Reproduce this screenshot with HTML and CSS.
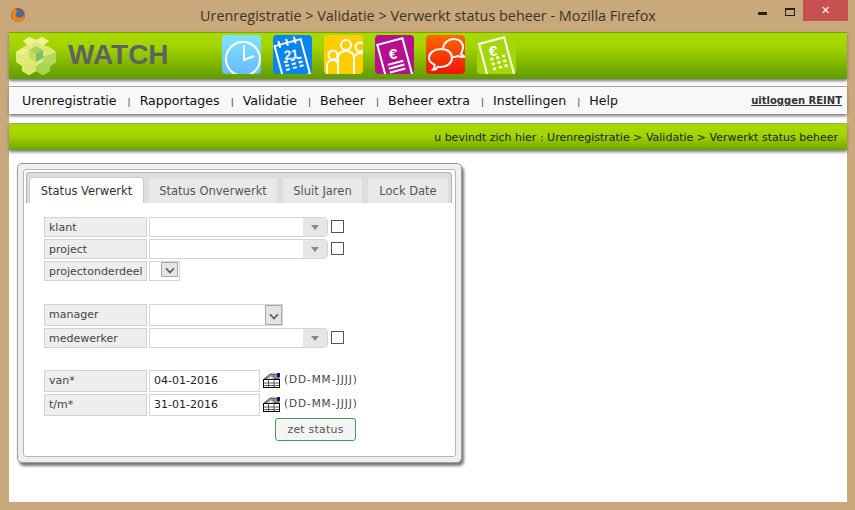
FILE: index.html
```html
<!DOCTYPE html>
<html lang="nl">
<head>
  <meta charset="UTF-8" />
  <title>Urenregistratie > Validatie > Verwerkt status beheer</title>
  <link rel="stylesheet" href="styles.css">
</head>
<body>
  <div class="titlebar">
    <svg class="ff" width="16" height="16" viewBox="0 0 16 16">
      <circle cx="8" cy="8" r="7" fill="#c8431e"/>
      <circle cx="9" cy="6.5" r="4.4" fill="#3d6ea8"/>
      <path d="M1.5 6C3 3 4 2 6 1 5 3 6 4 8 4 6 5 5 7 6 9c1 2 4 2 6 1 1-.6 2-1.6 2.6-3C14.8 11 12 15 8 15 4 15 1 11 1.500 6z" fill="#e8861c"/>
    </svg>
    <span class="wintitle">Urenregistratie &gt; Validatie &gt; Verwerkt status beheer - Mozilla Firefox</span>
    <div class="winbtns">
      <span class="win-min"></span>
      <span class="win-max"></span>
      <span class="win-close">✕</span>
    </div>
  </div>

  <div class="page">
    <header class="top">
      <svg class="logo" width="40" height="39" viewBox="0 0 40 39">
        <path d="M13 1l7 3 6-3 7 4-5 4 7 3 5 4v10l-6 4v5l-7 4-7-4-7 4-7-4v-5l-6-4V16l6-4 5-3-4-4z" fill="#e2ea78"/>
        <polygon points="13,1 20,4 26,1 33,5 27,9 20,6 13,9 7,5" fill="#f0f296"/>
        <polygon points="0,16 6,12 13,15 7,19" fill="#eef08c"/>
        <polygon points="28,12 35,12 40,16 33,19 27,15" fill="#dce86e"/>
        <polygon points="13,14 20,10 27,14 20,18" fill="#a6d452"/>
        <polygon points="13,14 20,18 20,26 13,22" fill="#c6de5e"/>
        <polygon points="20,18 27,14 27,22 20,26" fill="#74c26c"/>
        <polygon points="27,20 33,19 40,16 40,26 34,30 27,26" fill="#b4da5a"/>
        <polygon points="20,35 27,39 34,35 34,29 27,26 20,30" fill="#a8d456"/>
        <polygon points="13,27 20,30 20,35 13,39 6,35 6,30" fill="#dce670"/>
      </svg>
      <span class="brand">WATCH</span>
      <div class="apps">
        <svg class="app" viewBox="0 0 39 39">
          <defs><linearGradient id="g1" x1="0" y1="0" x2="0" y2="1"><stop offset="0" stop-color="#7fe4ff"/><stop offset="1" stop-color="#66bcff"/></linearGradient></defs>
          <rect width="39" height="39" rx="4" fill="url(#g1)"/>
          <circle cx="21" cy="24" r="17" fill="none" stroke="#fff" stroke-width="2"/>
          <path d="M22 10v15l10-4" fill="none" stroke="#fff" stroke-width="2"/>
        </svg>
        <svg class="app" viewBox="0 0 39 39">
          <rect width="39" height="39" rx="4" fill="#0a84ee"/>
          <g transform="rotate(-15 19 22)">
            <rect x="5" y="7" width="27" height="36" fill="none" stroke="#fff" stroke-width="2"/>
            <path d="M10 3v7M18 3v7M26 3v7" stroke="#fff" stroke-width="2"/>
            <path d="M10 25h4M17 25h4M24 25h4M10 29h4M17 29h4M24 29h4M10 33h4M17 33h4M24 33h4" stroke="#fff" stroke-width="2"/>
          </g>
          <text x="11" y="24" class="cal" transform="rotate(-8 19 20)">21</text>
        </svg>
        <svg class="app" viewBox="0 0 39 39">
          <rect width="39" height="39" rx="4" fill="#ffce00"/>
          <g fill="none" stroke="#fff" stroke-width="2">
            <circle cx="9" cy="20" r="4.500"/>
            <circle cx="22" cy="10" r="5"/>
            <circle cx="36" cy="12" r="4.500"/>
            <path d="M3 39V31c0-4 3-6 6-6 2 0 4 1 5 3"/>
            <path d="M14 39V22c0-3 3-6 8-6s8 3 8 6v17"/>
            <path d="M30 22c2-3 4-4 6-4 2 0 3 1 3 1"/>
          </g>
        </svg>
        <svg class="app" viewBox="0 0 39 39">
          <rect width="39" height="39" rx="4" fill="#b5108f"/>
          <g transform="rotate(-15 19 22)">
            <rect x="6" y="6" width="26" height="38" fill="none" stroke="#fff" stroke-width="2"/>
            <path d="M11 28h16M11 32h16M11 36h16" stroke="#fff" stroke-width="2"/>
          </g>
          <text x="14" y="24" class="euro">€</text>
        </svg>
        <svg class="app" viewBox="0 0 39 39">
          <defs><linearGradient id="g5" x1="0" y1="0" x2="0" y2="1"><stop offset="0" stop-color="#ff6a00"/><stop offset="1" stop-color="#f01400"/></linearGradient></defs>
          <rect width="39" height="39" rx="4" fill="url(#g5)"/>
          <g fill="none" stroke="#fff" stroke-width="2">
            <path d="M17 13c1-6 6-9 11-9 6 0 9 4 9 8 0 3-1 5-2 7l4 3c-3 0-5 0-7-1-2 1-3 1-5 1"/>
            <path d="M15 14c7 0 11 4 11 9s-5 9-11 9c-1 0-2 0-3-.3-1 2-3 3-5 3 1-1 2-3 1.500-5C5 28 3 26 3 23c0-5 5-9 12-9z"/>
          </g>
        </svg>
        <svg class="app" viewBox="0 0 39 39">
          <rect width="39" height="39" rx="4" fill="#a5d608"/>
          <g transform="rotate(-15 19 22)">
            <rect x="6" y="5" width="26" height="40" fill="none" stroke="#fff" stroke-width="2"/>
            <path d="M13 23h3M19 23h3M25 23h3M13 28h3M19 28h3M25 28h3M13 33h3M19 33h3M25 33h3" stroke="#fff" stroke-width="2.500"/>
          </g>
          <text x="12" y="21" class="euro">€</text>
        </svg>
      </div>
    </header>

    <nav class="menu">
      <a>Urenregistratie</a><i>|</i>
      <a>Rapportages</a><i>|</i>
      <a>Validatie</a><i>|</i>
      <a>Beheer</a><i>|</i>
      <a>Beheer extra</a><i>|</i>
      <a>Instellingen</a><i>|</i>
      <a>Help</a>
      <a class="logout">uitloggen REINT</a>
    </nav>

    <div class="crumb">u bevindt zich hier : Urenregistratie &gt; Validatie &gt; Verwerkt status beheer</div>

    <div class="panel">
      <div class="panel-in">
        <div class="tabs">
          <span class="tab active">Status Verwerkt</span>
          <span class="tab t2">Status Onverwerkt</span>
          <span class="tab t3">Sluit Jaren</span>
          <span class="tab t4">Lock Date</span>
        </div>

        <div class="form">
          <div class="row">
            <label>klant</label>
            <span class="combo"><b></b></span>
            <span class="check"></span>
          </div>
          <div class="row">
            <label>project</label>
            <span class="combo"><b></b></span>
            <span class="check"></span>
          </div>
          <div class="row">
            <label>projectonderdeel</label>
            <span class="sel tiny"><b></b></span>
          </div>

          <div class="row tall group-a">
            <label>manager</label>
            <span class="sel wide"><b></b></span>
          </div>
          <div class="row">
            <label>medewerker</label>
            <span class="combo"><b></b></span>
            <span class="check"></span>
          </div>

          <div class="row tall group-b">
            <label>van*</label>
            <span class="date">04-01-2016</span>
            <svg class="calicon" viewBox="0 0 17 15">
              <rect x=".5" y="6.500" width="16" height="8" fill="#fff" stroke="#000"/>
              <path d="M.5 10h16M.5 12.500h16M5.500 7v7M11 7v7" stroke="#333" stroke-width=".8"/>
              <path d="M1 6l6-5h7l2 2v3z" fill="#8a8f92" stroke="#333" stroke-width=".7"/>
              <path d="M4 6l4-3 3 3z" fill="#dfe2e4"/>
              <rect x="14" y="0" width="3" height="4" fill="#12128a"/>
            </svg>
            <span class="fmt">(DD-MM-JJJJ)</span>
          </div>
          <div class="row tall">
            <label>t/m*</label>
            <span class="date">31-01-2016</span>
            <svg class="calicon" viewBox="0 0 17 15">
              <rect x=".5" y="6.500" width="16" height="8" fill="#fff" stroke="#000"/>
              <path d="M.5 10h16M.5 12.500h16M5.500 7v7M11 7v7" stroke="#333" stroke-width=".8"/>
              <path d="M1 6l6-5h7l2 2v3z" fill="#8a8f92" stroke="#333" stroke-width=".7"/>
              <path d="M4 6l4-3 3 3z" fill="#dfe2e4"/>
              <rect x="14" y="0" width="3" height="4" fill="#12128a"/>
            </svg>
            <span class="fmt">(DD-MM-JJJJ)</span>
          </div>
          <button class="zet">zet status</button>
        </div>
      </div>
    </div>
  </div>
</body>
</html>
```

FILE: styles.css
```css
* { box-sizing: border-box; }
html, body { height: 100%; }
body {
  margin: 0;
  background: #c9a87c;
  display: flex;
  flex-direction: column;
  padding-bottom: 8px;
  overflow: hidden;
  font-family: "DejaVu Sans", Verdana, sans-serif;
  color: #333;
}

/* window frame */
.titlebar { height: 32px; flex: none; display: flex; position: relative; justify-content: center; }
.ff { position: absolute; left: 10px; top: 7px; }
.wintitle { font: 14.4px/32px "Open Sans", sans-serif; color: #3d3428; margin-left: 1px; }
.winbtns { position: absolute; right: 7px; top: 0; display: flex; align-items: flex-start; }
.win-min { width: 9px; height: 3px; background: #2a2015; margin-top: 12px; margin-right: 18px; }
.win-max { width: 10px; height: 8px; border: 1px solid #2a2015; border-top-width: 2px; margin-top: 8px; margin-right: 8px; }
.win-close { width: 45px; height: 21px; background: #c75050; color: #fff; font-size: 11px; line-height: 21px; text-align: center; }

.page { flex: 1; margin: 0 8px 0 9px; background: #fff; }

/* header */
.top {
  height: 47px;
  display: flex;
  align-items: flex-start;
  background: linear-gradient(#a9da00 0%, #a4d400 30%, #5f9b00 100%);
  border-top: 1px solid #7ea200;
  box-shadow: 0 2px 3px #777;
}
.logo { margin: 3px 0 0 7px; }
.brand { font: bold 28px/38px "Liberation Sans", sans-serif; color: #5f6360; margin: 3px 0 0 12px; width: 154px; }
.apps { display: flex; gap: 12px; margin-top: 2px; }
.app { width: 39px; height: 39px; display: block; }
.cal { font: bold 13px "Liberation Sans", sans-serif; fill: #fff; }
.euro { font: bold 15px "Liberation Sans", sans-serif; fill: #fff; }

/* menu */
.menu {
  margin-top: 7px;
  height: 28px;
  display: flex;
  align-items: center;
  padding: 0 5px 0 13px;
  background: #f8f8f9;
  border-top: 1px solid #a8a8a8;
  box-shadow: 0 2px 3px #777;
  font-size: 12.6px;
  color: #111;
}
.menu i { font-style: normal; font-size: 9px; margin: 2px 9px 0 11px; color: #333; }
.logout { margin-left: auto; font-size: 10px; font-weight: bold; text-decoration: underline; color: #333; }

/* breadcrumb */
.crumb {
  margin-top: 9px;
  height: 27px;
  padding-right: 9px;
  text-align: right;
  font-size: 11px;
  line-height: 28px;
  color: #222;
  background: linear-gradient(#a9da00 0%, #a4d400 45%, #6ba600 100%);
  border-top: 1px solid #9aa86a;
  box-shadow: 0 2px 3px #777;
}

/* panel with tabs */
.panel {
  margin: 13px 0 0 8px;
  width: 445px;
  height: 300px;
  padding: 5px;
  background: #efefef;
  border: 1px solid #999;
  border-radius: 5px;
  box-shadow: 2px 3px 3px #777;
}
.panel-in { height: 100%; background: #fff; border: 1px solid #b5b5b5; border-radius: 3px; padding: 2px; }
.tabs {
  height: 31px;
  display: flex;
  align-items: flex-end;
  gap: 4px;
  padding-left: 2px;
  margin-right: 1px;
  background: #dedede;
  border: 1px solid #b0b0b0;
  border-bottom: 0;
  border-radius: 4px 4px 0 0;
}
.tab {
  height: 26px;
  display: block;
  text-align: center;
  line-height: 27px;
  font-size: 11.5px;
  color: #555;
  background: #e9e9e9;
  border: 1px solid #dcdcdc;
  border-bottom: 0;
  border-radius: 4px 4px 0 0;
}
.tab.active { width: 115px; background: #fff; color: #333; border-color: #ccc; }
.t2 { width: 130px; }
.t3 { width: 81px; }
.t4 { width: 82px; }

/* form */
.form { padding: 14px 0 0 18px; display: flex; flex-direction: column; gap: 2px; }
.row { display: flex; align-items: flex-start; height: 20px; }
.row.tall { height: 22px; }
.group-a { margin-top: 21px; }
.group-b { margin-top: 20px; }
label {
  width: 103px;
  height: 100%;
  margin-right: 2px;
  padding-left: 4px;
  font-size: 11px;
  line-height: 20px;
  color: #444;
  background: #eee;
  border: 1px solid #d2d2d2;
}
.combo {
  width: 179px;
  height: 20px;
  display: flex;
  justify-content: flex-end;
  background: #fff;
  border: 1px solid #d4d4d4;
  border-radius: 0 4px 4px 0;
}
.combo b { width: 24px; background: #e6e6e6; border-radius: 0 3px 3px 0; position: relative; }
.combo b::after {
  content: "";
  position: absolute;
  left: 8px;
  top: 7px;
  border: 4px solid transparent;
  border-top: 5px solid #888;
  border-bottom: 0;
}
.check { width: 13px; height: 13px; margin: 3px 0 0 3px; border: 1px solid #555; background: #fff; }
.sel { height: 100%; display: flex; justify-content: flex-end; background: #fff; border: 1px solid #d4d4d4; }
.sel.wide { width: 134px; }
.sel.tiny { width: 31px; padding: 0 1px 3px 0; }
.sel b { width: 17px; background: #e4e4e4; border: 1px solid #a8a8a8; position: relative; }
.sel b::after {
  content: "";
  position: absolute;
  left: 4px;
  top: 2px;
  width: 6px;
  height: 6px;
  border: solid #556;
  border-width: 0 2px 2px 0;
  transform: rotate(45deg) scale(.8);
}
.sel.wide b::after { top: 5px; }
.date {
  width: 111px;
  height: 100%;
  padding-left: 4px;
  font-size: 11px;
  line-height: 20px;
  color: #222;
  background: #fff;
  border: 1px solid #d4d4d4;
}
.calicon { width: 17px; height: 15px; margin: 3px 0 0 3px; }
.fmt { font-size: 10.500px; letter-spacing: .9px; line-height: 18px; margin-left: 4px; color: #444; }
.zet {
  width: 81px;
  height: 23px;
  margin-left: 231px;
  padding: 0;
  font: 11px "DejaVu Sans", sans-serif;
  letter-spacing: .2px;
  color: #555;
  background: #f5f5f5;
  border: 1px solid #3f9e5c;
  border-radius: 3px;
}
```
